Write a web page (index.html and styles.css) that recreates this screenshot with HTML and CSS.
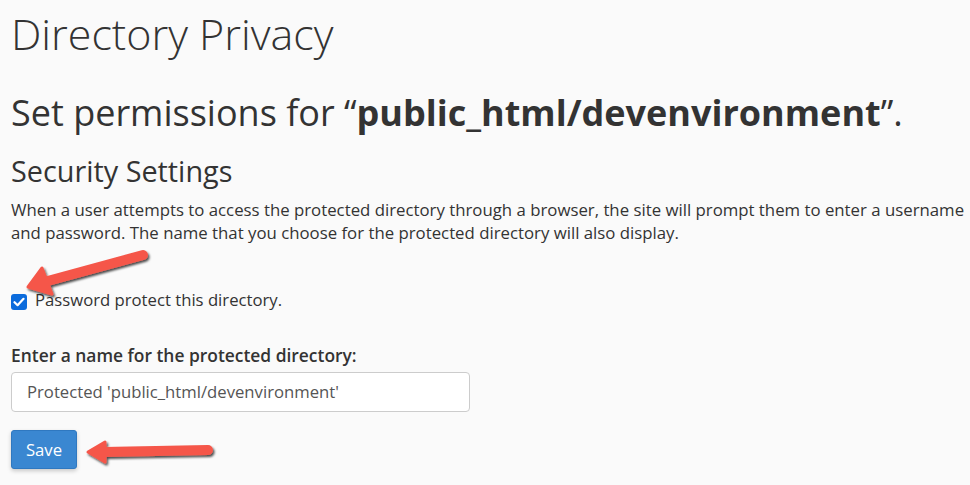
FILE: index.html
```html
<!DOCTYPE html>
<html>
<head>
<meta charset="utf-8">
<link rel="stylesheet" href="styles.css">
</head>
<body>
<div class="page">
  <h1 class="title">Directory Privacy</h1>
  <h2 class="subtitle">Set permissions for “<strong>public_html/devenvironment</strong>”.</h2>
  <h3 class="section">Security Settings</h3>
  <p class="desc">When a user attempts to access the protected directory through a browser, the site will prompt them to enter a username and password. The name that you choose for the protected directory will also display.</p>
  <label class="check">
    <span class="box"><svg width="12" height="10" viewBox="0 0 12 10"><path d="M1.5 5.2 L4.6 8.2 L10.5 1.8" fill="none" stroke="#fff" stroke-width="2.2" stroke-linecap="round" stroke-linejoin="round"/></svg></span>
    <span>Password protect this directory.</span>
  </label>
  <div class="field">
    <div class="field-label">Enter a name for the protected directory:</div>
    <div class="input">Protected 'public_html/devenvironment'</div>
  </div>
  <button class="btn">Save</button>
</div>
<svg class="arrow arrow1" width="140" height="60" viewBox="0 0 140 60">
  <defs>
    <filter id="sh1" x="-20%" y="-40%" width="140%" height="180%">
      <feDropShadow dx="1.5" dy="2" stdDeviation="1.2" flood-color="#000" flood-opacity="0.7"/>
    </filter>
  </defs>
  <g filter="url(#sh1)" fill="#f5574a" stroke="#f5574a">
    <line x1="123" y1="9" x2="24" y2="36" stroke-width="10" stroke-linecap="round"/>
    <polygon points="8,41 22,22 32,48" stroke-width="3" stroke-linejoin="round"/>
  </g>
</svg>
<svg class="arrow arrow2" width="140" height="40" viewBox="0 0 140 40">
  <defs>
    <filter id="sh2" x="-20%" y="-40%" width="140%" height="180%">
      <feDropShadow dx="1.5" dy="2" stdDeviation="1.2" flood-color="#000" flood-opacity="0.7"/>
    </filter>
  </defs>
  <g filter="url(#sh2)" fill="#f5574a" stroke="#f5574a">
    <line x1="126" y1="19" x2="22" y2="21" stroke-width="10" stroke-linecap="round"/>
    <polygon points="6,21 23,11 23,31" stroke-width="3" stroke-linejoin="round"/>
  </g>
</svg>
</body>
</html>
```
FILE: styles.css
```css
html, body {
  margin: 0;
  padding: 0;
  background: #fafafa;
}
body {
  font-family: "Open Sans", "Liberation Sans", sans-serif;
  color: #333;
  position: relative;
  width: 970px;
  height: 485px;
  overflow: hidden;
}
.page {
  padding: 10px 0 0 11px;
  display: flex;
  flex-direction: column;
  align-items: flex-start;
}
.title {
  font-weight: 300;
  font-size: 43px;
  line-height: 48px;
  margin: 0;
}
.subtitle {
  font-weight: 400;
  font-size: 36px;
  line-height: 40px;
  margin: 35px 0 0 0;
}
.subtitle strong { font-weight: 700; }
.section {
  font-weight: 400;
  font-size: 28.8px;
  line-height: 34px;
  margin: 21px 0 0 0;
}
.desc {
  font-size: 16.8px;
  line-height: 23px;
  margin: 10px 0 0 0;
}
.check {
  display: flex;
  align-items: center;
  gap: 8px;
  font-size: 16.7px;
  margin-top: 44px;
}
.box {
  width: 16px;
  height: 16px;
  border-radius: 3px;
  background: #0b6bdc;
  display: flex;
  align-items: center;
  justify-content: center;
  margin-top: 4px;
}
.field {
  margin-top: 34px;
  display: flex;
  flex-direction: column;
}
.field-label {
  font-size: 17.4px;
  font-weight: 600;
  line-height: 20px;
}
.input {
  margin-top: 7px;
  width: 427px;
  height: 38px;
  border: 1px solid #ccc;
  border-radius: 4px;
  background: #fff;
  color: #555;
  font-size: 16.7px;
  line-height: 38px;
  padding: 0 15px;
}
.btn {
  margin-top: 18px;
  font-family: inherit;
  font-size: 16.7px;
  color: #fff;
  background: #3a87d1;
  border: 1px solid #2f78c0;
  border-radius: 3px;
  width: 66px;
  height: 39px;
  padding: 0;
  box-shadow: 0 2px 4px rgba(0,0,0,0.2);
}
.arrow {
  position: absolute;
}
.arrow1 { left: 20px; top: 246px; }
.arrow2 { left: 82px; top: 431px; }
```
